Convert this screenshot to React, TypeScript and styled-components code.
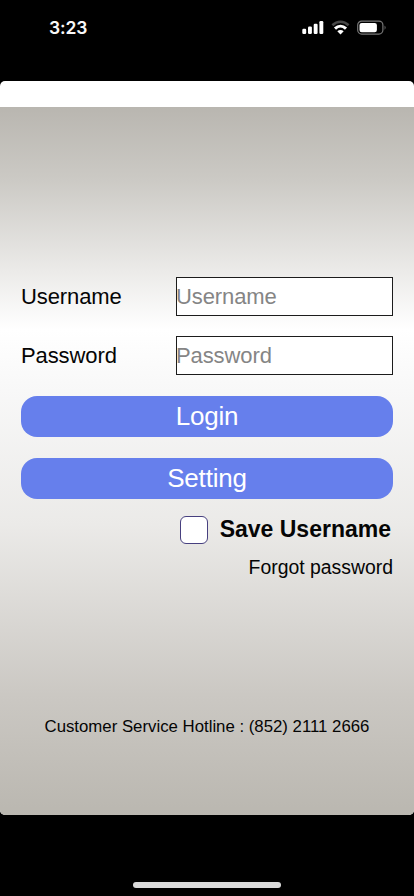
import React from "react";
import styled, { createGlobalStyle } from "styled-components";

const GlobalStyle = createGlobalStyle`
  * { box-sizing: border-box; }
  html, body { margin: 0; background: #000; }
  body { font-family: "Liberation Sans", Arial, sans-serif; color: #050505; }
`;

const Screen = styled.div`
  width: 414px;
  height: 896px;
  display: flex;
  flex-direction: column;
  background: #000;
  overflow: hidden;
`;

const StatusBar = styled.header`
  height: 81px;
  flex: none;
  display: flex;
  justify-content: space-between;
  align-items: flex-start;
  padding: 17px 27px 0 49px;
`;

const Time = styled.div`
  font: 600 17.5px/22px Inter, sans-serif;
  letter-spacing: -0.1px;
  color: #f8f8f8;
`;

const StatusIcons = styled.svg`
  display: block;
  width: 86px;
  height: 22px;
`;

const Sheet = styled.main`
  height: 734px;
  flex: none;
  display: flex;
  flex-direction: column;
  border-radius: 5px;
  overflow: hidden;
  background: #fff;
`;

const Body = styled.form`
  margin-top: 26px;
  flex: 1;
  display: flex;
  flex-direction: column;
  padding: 169px 21px 0;
  background: linear-gradient(
    180deg,
    #b9b6b0 0%,
    #cbc9c4 10%,
    #ebeae8 23%,
    #ffffff 31.5%,
    #f8f8f8 40%,
    #ebeae8 59%,
    #cbc8c3 83%,
    #bab7b0 100%
  );
`;

const Field = styled.label`
  display: grid;
  grid-template-columns: 155px 217px;
  align-items: center;
  height: 40px;
  margin-bottom: 19px;
  font-size: 22px;
  line-height: 26px;
  letter-spacing: -0.1px;
`;

const FieldName = styled.span`
  padding-top: 1px;
`;

const Input = styled.input`
  height: 39px;
  width: 217px;
  padding: 1px 0 0;
  border: 1.5px solid #1c1c1c;
  border-radius: 0;
  background: #fff;
  font: inherit;
  letter-spacing: inherit;
  text-indent: -1px;
  outline: none;
  &::placeholder { color: #858585; opacity: 1; }
`;

const Button = styled.button`
  height: 41px;
  flex: none;
  margin: 0 0 21px;
  padding: 0 0 1px;
  border: 0;
  border-radius: 16px;
  background: #667fec;
  color: #fff;
  font: 26px/40px "Liberation Sans", Arial, sans-serif;
  letter-spacing: -0.2px;
`;

const Actions = styled.div`
  display: flex;
  flex-direction: column;
  margin-top: 1.6px;
`;

const SaveRow = styled.label`
  display: flex;
  justify-content: flex-end;
  align-items: center;
  gap: 12px;
  height: 28px;
  margin: -4px 2px 0 0;
  font-size: 23px;
  line-height: 24px;
  font-weight: 700;
`;

const SaveText = styled.span`
  padding-bottom: 2px;
`;

const Checkbox = styled.input`
  appearance: none;
  width: 28px;
  height: 28px;
  margin: 0;
  border: 1.5px solid #47407f;
  border-radius: 6px;
  background: #fff;
`;

const Forgot = styled.a`
  align-self: flex-end;
  margin-top: 11px;
  font-size: 19.4px;
  line-height: 24px;
`;

const Hotline = styled.p`
  margin: 136px 0 0;
  text-align: center;
  font-size: 16.8px;
  line-height: 24px;
  white-space: nowrap;
`;

const HomeArea = styled.footer`
  flex: 1;
  display: flex;
  justify-content: center;
  align-items: flex-end;
  padding-bottom: 8px;
`;

const HomeIndicator = styled.div`
  width: 148px;
  height: 6px;
  border-radius: 3px;
  background: #dadada;
`;

export default function App() {
  return (
    <Screen>
      <GlobalStyle />
      <StatusBar>
        <Time>3:23</Time>
        <StatusIcons viewBox="0 0 86 22" fill="none">
          <g fill="#fff">
            <rect x="1.3" y="11.7" width="3.9" height="5.3" rx="1.2" />
            <rect x="7" y="9.5" width="3.9" height="7.5" rx="1.2" />
            <rect x="12.7" y="6.7" width="3.9" height="10.3" rx="1.2" />
            <rect x="18.4" y="4" width="3.9" height="13" rx="1.2" />
          </g>
          <path d="M31.4 8.2C36.2 3.6 42.8 3.6 47.6 8.2" stroke="#484848" strokeWidth="2.6" />
          <path d="M34 11.6C37.3 8.4 41.7 8.4 45 11.6" stroke="#fff" strokeWidth="3" />
          <path d="M36.3 14.2Q39.5 11.6 42.7 14.2L39.5 17.4Z" fill="#fff" />
          <rect x="56.7" y="4.1" width="25.2" height="13" rx="4" stroke="#777" strokeWidth="1.2" />
          <rect x="58.5" y="5.9" width="17.4" height="9.4" rx="2.2" fill="#fff" />
          <path d="M83.6 8.5Q85.5 10.6 83.6 12.7Z" fill="#777" />
        </StatusIcons>
      </StatusBar>
      <Sheet>
        <Body>
          <Field>
            <FieldName>Username</FieldName>
            <Input placeholder="Username" />
          </Field>
          <Field>
            <FieldName>Password</FieldName>
            <Input type="password" placeholder="Password" />
          </Field>
          <Actions>
            <Button type="button">Login</Button>
            <Button type="button">Setting</Button>
            <SaveRow>
              <Checkbox type="checkbox" />
              <SaveText>Save Username</SaveText>
            </SaveRow>
            <Forgot>Forgot password</Forgot>
          </Actions>
          <Hotline>Customer Service Hotline : (852) 2111 2666</Hotline>
        </Body>
      </Sheet>
      <HomeArea>
        <HomeIndicator />
      </HomeArea>
    </Screen>
  );
}
